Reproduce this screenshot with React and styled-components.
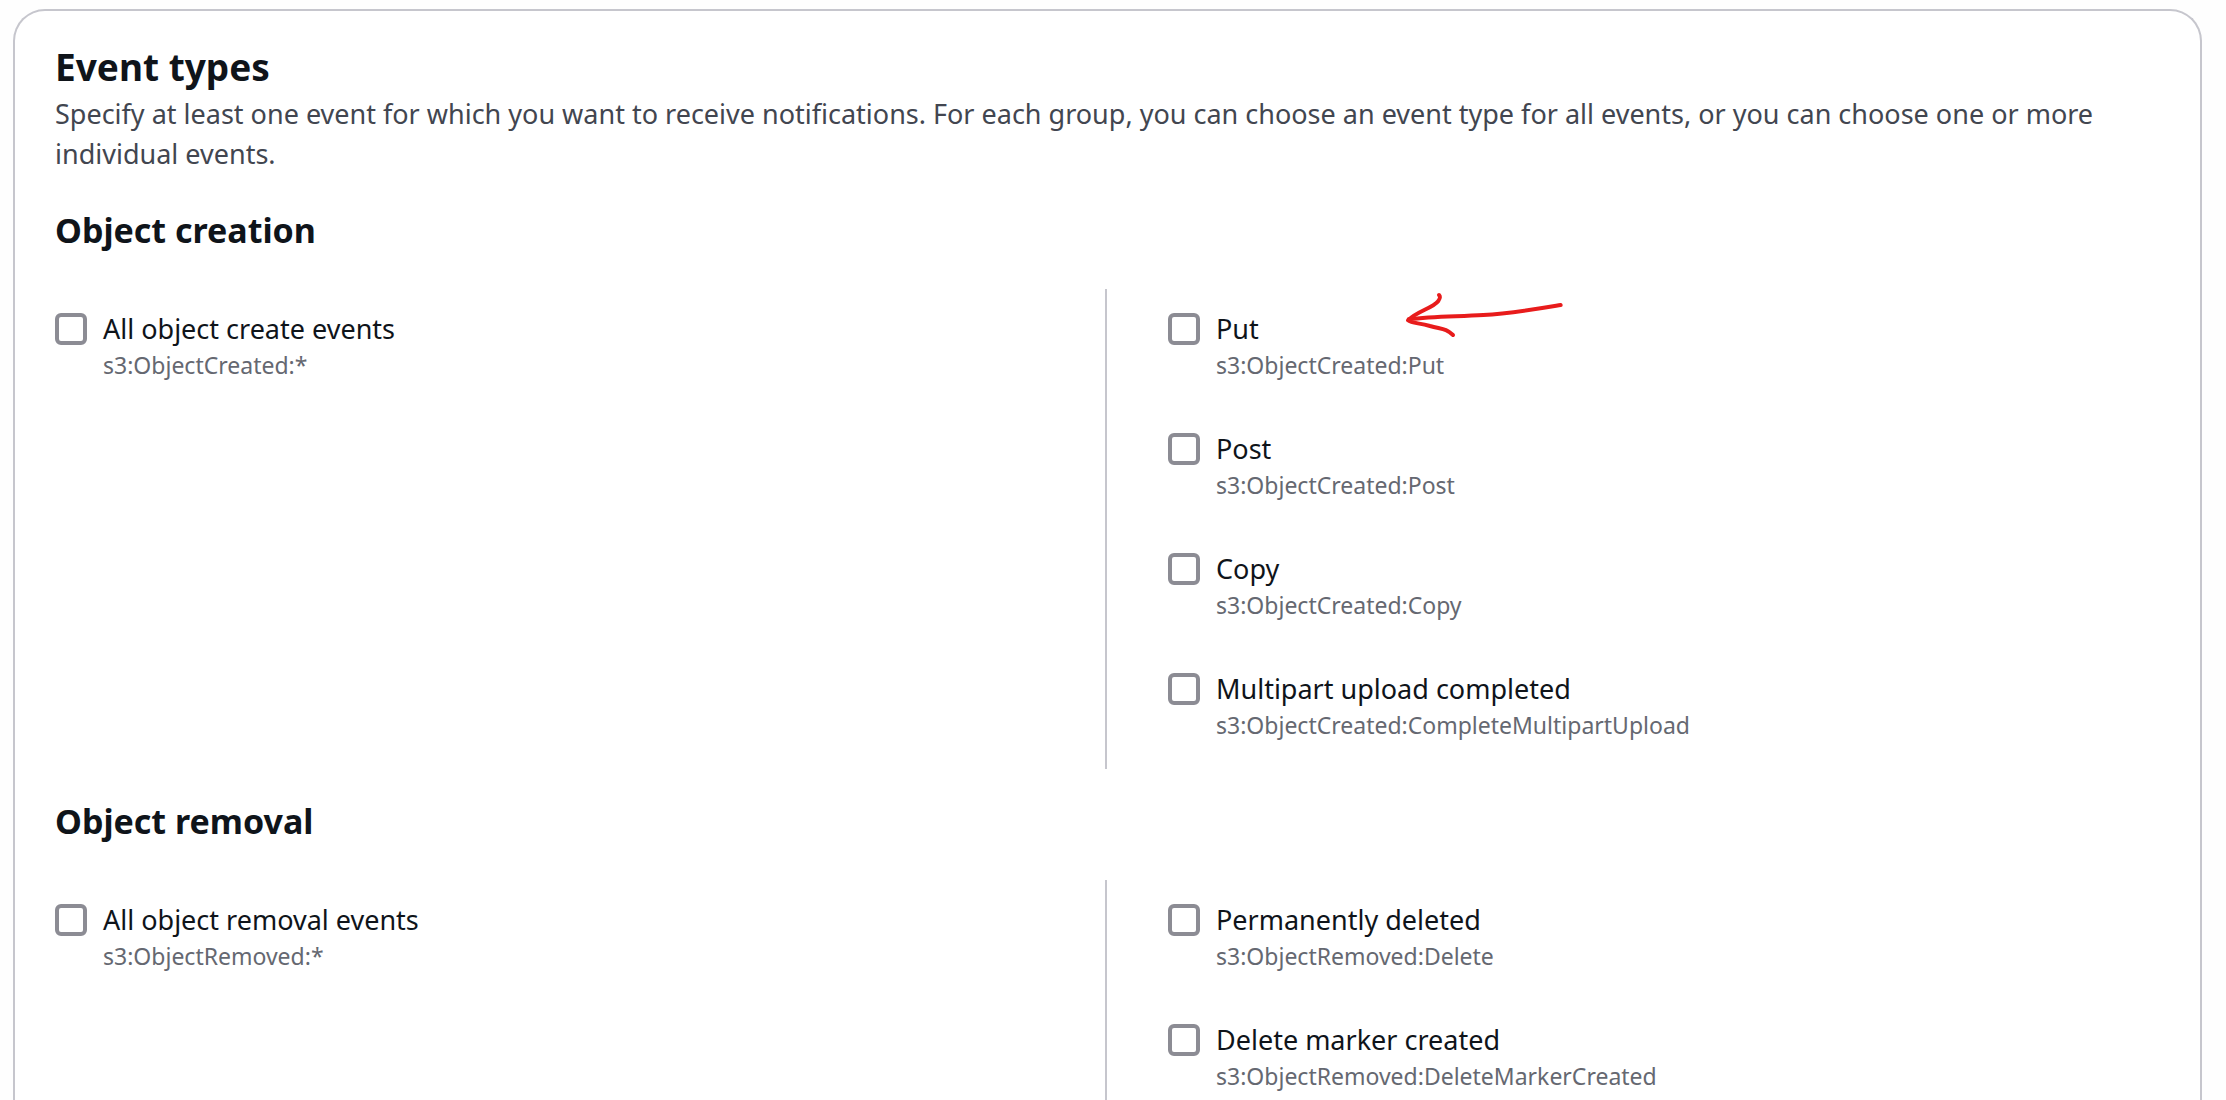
import React, { useId } from "react";
import styled, { createGlobalStyle } from "styled-components";

const GlobalStyle = createGlobalStyle`
  *, *::before, *::after { box-sizing: border-box; }
  html { height: 100%; overflow: hidden; }
  body {
    height: 100%;
    margin: 0;
    background: #fefefe;
    color: #0f141a;
    font-family: "Noto Sans", "Open Sans", sans-serif;
    font-size: 27px;
    line-height: 40px;
  }
  #root { height: 100%; }
`;

const Page = styled.main`
  display: flex;
  min-height: 100%;
  padding: 9px 24px 0 13px;
`;

const Card = styled.section`
  flex: 1;
  padding: 31px 40px 0;
  background: #fff;
  border: 2px solid #c6c6cd;
  border-bottom: 0;
  border-radius: 32px 32px 0 0;
`;

const Title = styled.h2`
  margin: 0 0 2px;
  font-size: 37px;
  font-weight: 700;
  line-height: 50px;
`;

const Description = styled.p`
  margin: 0 0 36px;
  color: #424650;
`;

const Group = styled.fieldset`
  min-width: 0;
  margin: 0 0 32px;
  padding: 0;
  border: 0;
`;

const GroupTitle = styled.legend`
  margin: 0 0 39px;
  padding: 0;
  font-size: 34px;
  font-weight: 700;
  line-height: 40px;
`;

const Columns = styled.div`
  display: grid;
  grid-template-columns: 1fr 1fr;
  column-gap: 1px;
`;

const OptionList = styled.div`
  display: flex;
  flex-direction: column;
  gap: 8px;
  padding: 20px 0 20px ${(p) => (p.$inset ? "60px" : "0")};
  border-right: ${(p) => (p.$inset ? "0" : "2px solid #c6c6cd")};
`;

const OptionRow = styled.div`
  position: relative;
  display: grid;
  grid-template-columns: 32px 1fr;
  column-gap: 16px;
  min-height: 112px;

  &:last-child { min-height: 80px; }
`;

const Checkbox = styled.input`
  appearance: none;
  width: 32px;
  height: 32px;
  margin: 4px 0;
  background: #fff;
  border: 4px solid #8c8c94;
  border-radius: 6px;
  cursor: pointer;

  &:checked { background: #006ce0; border-color: #006ce0; }
`;

const OptionText = styled.div`
  display: flex;
  flex-direction: column;
  align-items: flex-start;
`;

const OptionLabel = styled.label`
  cursor: pointer;
`;

const OptionHint = styled.span`
  color: #656871;
  font-size: 23px;
  line-height: 32px;
`;

const Arrow = styled.svg`
  position: absolute;
  top: -19px;
  left: 235px;
  width: 164px;
  height: 50px;
  pointer-events: none;
`;

function HandDrawnArrow() {
  return (
    <Arrow viewBox="969 60 492 150" fill="none" stroke="#e81c1c" strokeWidth="12" strokeLinecap="round" strokeLinejoin="round" aria-hidden="true">
      <path d="M1442 105C1370 117 1290 131 1210 135C1130 140 1060 138 986 148" />
      <path d="M1077 75C1082 80 1081 84 1075 93C1058 115 1012 123 984 151C996 161 1018 158 1050 168C1085 178 1097 174 1119 195" />
    </Arrow>
  );
}

function Option({ label, hint, marked }) {
  const id = useId();
  return (
    <OptionRow>
      <Checkbox type="checkbox" id={id} aria-describedby={`${id}-hint`} />
      <OptionText>
        <OptionLabel htmlFor={id}>{label}</OptionLabel>
        <OptionHint id={`${id}-hint`}>{hint}</OptionHint>
      </OptionText>
      {marked && <HandDrawnArrow />}
    </OptionRow>
  );
}

const groups = [
  {
    title: "Object creation",
    all: { label: "All object create events", hint: "s3:ObjectCreated:*" },
    events: [
      { label: "Put", hint: "s3:ObjectCreated:Put", marked: true },
      { label: "Post", hint: "s3:ObjectCreated:Post" },
      { label: "Copy", hint: "s3:ObjectCreated:Copy" },
      { label: "Multipart upload completed", hint: "s3:ObjectCreated:CompleteMultipartUpload" },
    ],
  },
  {
    title: "Object removal",
    all: { label: "All object removal events", hint: "s3:ObjectRemoved:*" },
    events: [
      { label: "Permanently deleted", hint: "s3:ObjectRemoved:Delete" },
      { label: "Delete marker created", hint: "s3:ObjectRemoved:DeleteMarkerCreated" },
    ],
  },
];

export default function App() {
  return (
    <>
      <GlobalStyle />
      <Page>
        <Card>
          <Title>Event types</Title>
          <Description>
            Specify at least one event for which you want to receive notifications. For each group, you can choose an
            event type for all events, or you can choose one or more individual events.
          </Description>
          {groups.map((group) => (
            <Group key={group.title}>
              <GroupTitle>{group.title}</GroupTitle>
              <Columns>
                <OptionList>
                  <Option {...group.all} />
                </OptionList>
                <OptionList $inset>
                  {group.events.map((event) => (
                    <Option key={event.label} {...event} />
                  ))}
                </OptionList>
              </Columns>
            </Group>
          ))}
        </Card>
      </Page>
    </>
  );
}
